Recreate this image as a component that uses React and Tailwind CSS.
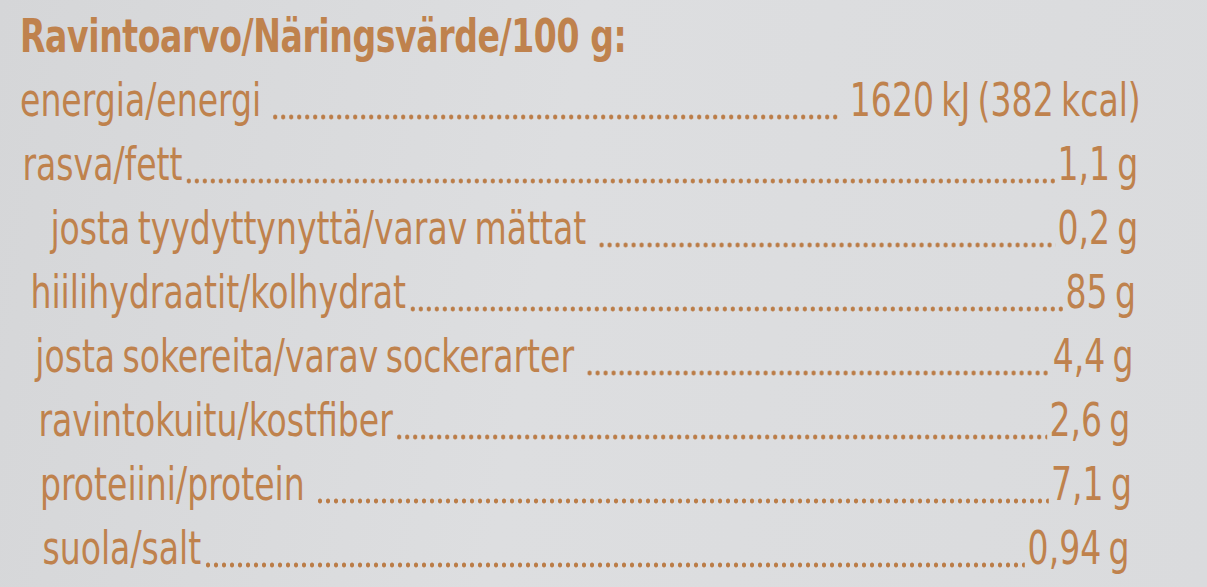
const rows = [
  { label: 'energia/energi', value: '1620 kJ (382 kcal)', pad: 'pl-[25px] pr-[83px]', space: 'mr-[12px]', tail: 'ml-[12px]' },
  { label: 'rasva/fett', value: '1,1 g', pad: 'pl-[28px] pr-[86px]', space: 'mr-[3px]', tail: 'ml-[3px]' },
  { label: 'josta tyydyttynyttä/varav mättat', value: '0,2 g', pad: 'pl-[63px] pr-[86px]', space: 'mr-[14px]', tail: 'ml-[3px]' },
  { label: 'hiilihydraatit/kolhydrat', value: '85 g', pad: 'pl-[38px] pr-[89px]', space: 'mr-[3px]', tail: 'ml-[3px]' },
  { label: 'josta sokereita/varav sockerarter', value: '4,4 g', pad: 'pl-[44px] pr-[92px]', space: 'mr-[14px]', tail: 'ml-[3px]' },
  { label: 'ravintokuitu/kostfiber', value: '2,6 g', pad: 'pl-[48px] pr-[96px]', space: 'mr-[3px]', tail: 'ml-[3px]' },
  { label: 'proteiini/protein', value: '7,1 g', pad: 'pl-[50px] pr-[94px]', space: 'mr-[14px]', tail: 'ml-[3px]' },
  { label: 'suola/salt', value: '0,94 g', pad: 'pl-[53px] pr-[97px]', space: 'mr-[3px]', tail: 'ml-[3px]' },
];

function Leader() {
  return (
    <span className="flex-1 h-[6px] mb-[10px] bg-[radial-gradient(circle,#bb7d48_2.2px,transparent_2.8px)] bg-[length:10px_6px] bg-repeat-x" />
  );
}

export default function App() {
  return (
    <div className="w-[1207px] h-[587px] overflow-hidden bg-[linear-gradient(100deg,#d5d6d8_0%,#dddee0_45%,#dadbdd_100%)] text-[#bf824d] font-['Liberation_Sans_Narrow','DejaVu_Sans_Condensed','Liberation_Sans',sans-serif] [font-stretch:condensed]">
      {/* condensed label face: whole sheet squeezed horizontally */}
      <div className="w-[1509px] origin-top-left scale-x-80">
        <div className="pl-[25px] pt-[6px] h-[66px] text-[46px] font-bold leading-[60px] tracking-[-0.5px]">
          Ravintoarvo/Näringsvärde/100 g:
        </div>
        <div className="flex flex-col">
          {rows.map((r) => (
            <div key={r.label} className={`flex items-end h-[64px] ${r.pad} text-[46px] leading-[60px] [word-spacing:-4px]`}>
              <span className={`whitespace-nowrap ${r.space}`}>{r.label}</span>
              <Leader />
              <span className={`whitespace-nowrap ${r.tail}`}>{r.value}</span>
            </div>
          ))}
        </div>
      </div>
    </div>
  );
}
